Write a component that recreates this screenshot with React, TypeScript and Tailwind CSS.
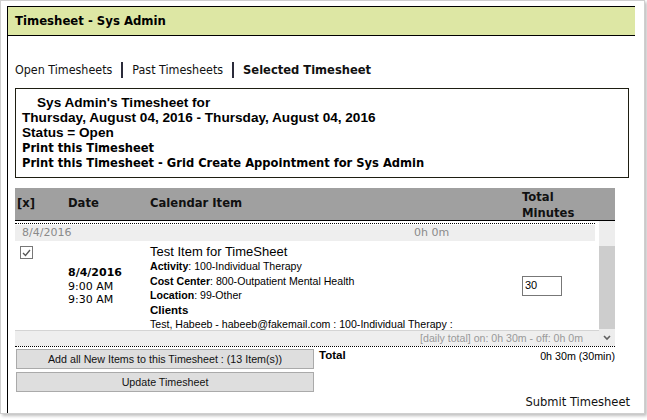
const tahoma = "font-['DejaVu_Sans_Condensed','Liberation_Sans',sans-serif]";
const verdana = "font-['DejaVu_Sans',sans-serif]";
const arial = "font-['Liberation_Sans',Arial,sans-serif]";

function CheckMark() {
  return (
    <div className="w-[13px] h-[13px] border border-[#777] bg-white flex items-center justify-center">
      <svg width="9" height="8" viewBox="0 0 9 8">
        <path d="M1 4 L3.5 6.5 L8 1" fill="none" stroke="#555" strokeWidth="1.3" />
      </svg>
    </div>
  );
}

function Scrollbar() {
  return (
    <div className="w-[16px] flex flex-col">
      <div className="h-[25px] bg-[#ededed]" />
      <div className="h-[83px] bg-[#cdcdcd]" />
      <div className="flex-1 bg-[#ededed] flex items-center justify-center">
        <svg width="8" height="6" viewBox="0 0 8 6">
          <path d="M1 1 L4 4 L7 1" fill="none" stroke="#606060" strokeWidth="1.6" />
        </svg>
      </div>
    </div>
  );
}

export default function App() {
  return (
    <div className="w-[647px] h-[420px] bg-white overflow-hidden">
      <div className="w-[645px] h-[414px] border border-[#cfcfcf] shadow-[2px_2px_3px_rgba(0,0,0,0.25)] pl-[6px] pt-[5px] overflow-hidden">
        <div className="w-[628px] h-[420px] border-l border-black">

          {/* Title bar */}
          <div className="h-[30px] border-y border-black bg-[#dde7a4] flex items-center pl-[7px]">
            <span className={`${tahoma} text-[13px] font-bold text-black`}>Timesheet - Sys Admin</span>
          </div>

          {/* Tabs */}
          <div className={`${tahoma} text-[12.4px] text-[#111] flex items-center h-[16px] mt-[26px] pl-[7px]`}>
            <span>Open Timesheets</span>
            <span className="w-[2px] h-[16px] bg-[#2b2b3a] mx-[9px]" />
            <span>Past Timesheets</span>
            <span className="w-[2px] h-[16px] bg-[#2b2b3a] mx-[9px]" />
            <span className="font-bold text-[12.8px]">Selected Timesheet</span>
          </div>

          {/* Timesheet summary */}
          <div className="ml-[7px] mt-[10px] w-[614px] border border-[#1e1e12] pt-[6px] pb-[6px] pl-[6px] text-black">
            <div className={`${arial} font-bold text-[13.6px] leading-[15px] pl-[15px]`}>Sys Admin's Timesheet for</div>
            <div className={`${arial} font-bold text-[13.6px] leading-[15px]`}>Thursday, August 04, 2016 - Thursday, August 04, 2016</div>
            <div className={`${arial} font-bold text-[13.6px] leading-[15px]`}>Status = Open</div>
            <div className={`${tahoma} font-bold text-[12.8px] leading-[15px]`}>Print this Timesheet</div>
            <div className={`${tahoma} font-bold text-[12.8px] leading-[16px]`}>Print this Timesheet - Grid Create Appointment for Sys Admin</div>
          </div>

          {/* Items table */}
          <div className="ml-[7px] mt-[10px] w-[600px]">
            <div className={`${verdana} font-bold text-[11.6px] text-[#111] h-[33px] bg-[#a0a0a0] border-b border-black flex items-center`}>
              <div className="w-[53px] pl-[2px]">[x]</div>
              <div className="w-[82px]">Date</div>
              <div className="w-[372px]">Calendar Item</div>
              <div className="leading-[16px] pt-[1px]">Total<br />Minutes</div>
            </div>

            <div className="h-[126px] flex border-b border-dotted border-black">
              <div className="w-[584px] flex flex-col">
                <div className="h-[2px]" />
                <div className="border-t border-dotted border-black mr-[4px]" />
                <div className={`${verdana} text-[11px] text-[#8a8a8a] h-[16px] mt-[1px] mr-[4px] bg-[#eeeeee] flex items-center`}>
                  <span className="w-[399px] pl-[7px]">8/4/2016</span>
                  <span>0h 0m</span>
                </div>

                <div className="h-[89px] flex">
                  <div className="w-[53px] pl-[5px] pt-[5px]">
                    <CheckMark />
                  </div>
                  <div className={`${verdana} w-[82px] text-[11px] leading-[13.5px] text-black flex flex-col justify-center pt-[2px]`}>
                    <span className="font-bold">8/4/2016</span>
                    <span>9:00 AM</span>
                    <span>9:30 AM</span>
                  </div>
                  <div className={`${arial} w-[372px] text-black pt-[3px]`}>
                    <div className="text-[13px] leading-[15px]">Test Item for TimeSheet</div>
                    <div className="text-[10.6px] leading-[14.5px]"><b>Activity</b>: 100-Individual Therapy</div>
                    <div className="text-[10.6px] leading-[14.5px]"><b>Cost Center</b>: 800-Outpatient Mental Health</div>
                    <div className="text-[10.6px] leading-[14.5px]"><b>Location</b>: 99-Other</div>
                    <div className="text-[11.5px] leading-[14.5px] font-bold">Clients</div>
                    <div className="text-[10.6px] leading-[14.5px]">Test, Habeeb - habeeb@fakemail.com : 100-Individual Therapy :</div>
                  </div>
                  <div className="flex items-center">
                    <div className={`${arial} w-[40px] h-[20px] border border-[#777] text-[11px] text-black flex items-center pl-[2px]`}>30</div>
                  </div>
                </div>

                <div className={`${arial} h-[16px] bg-[#eeeeee] border-t border-[#d4d4d4] text-[10.6px] text-[#9a9a9a] flex items-center justify-end pr-[16px]`}>
                  [daily total] on: 0h 30m - off: 0h 0m
                </div>
              </div>
              <Scrollbar />
            </div>

            {/* Actions and totals */}
            <div className="flex mt-[2px]">
              <div className="flex flex-col gap-[3px] pl-[1px]">
                <button className={`${arial} w-[298px] h-[20px] bg-[#dedede] border border-[#aaaaaa] text-[10.7px] text-[#111]`}>
                  Add all New Items to this Timesheet : (13 Item(s))
                </button>
                <button className={`${arial} w-[298px] h-[20px] bg-[#dedede] border border-[#aaaaaa] text-[10.7px] text-[#111]`}>
                  Update Timesheet
                </button>
              </div>
              <div className={`${arial} flex-1 flex justify-between pl-[5px] h-[16px] items-center mt-[-1px]`}>
                <span className="font-bold text-[11.5px] text-black">Total</span>
                <span className="text-[10.7px] text-black">0h 30m (30min)</span>
              </div>
            </div>
          </div>

          <div className={`${tahoma} text-[12.8px] text-[#111] w-[622px] text-right`}>Submit Timesheet</div>
        </div>
      </div>
    </div>
  );
}
